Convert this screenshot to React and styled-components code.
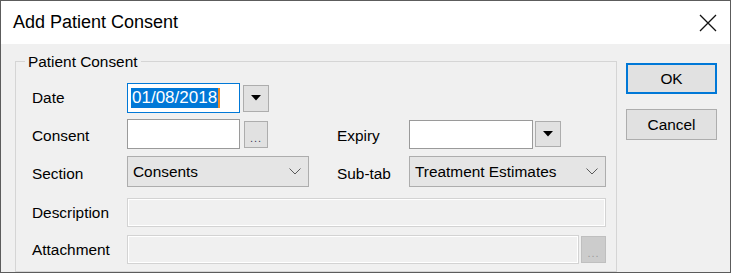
import React from "react";
import styled, { createGlobalStyle } from "styled-components";

const GlobalStyle = createGlobalStyle`
  html, body {
    margin: 0;
    padding: 0;
    background: #ffffff;
  }
  body {
    font-family: "Liberation Sans", Arial, sans-serif;
    color: #000;
  }
`;

//Window frame
const Window = styled.div`
  width: 731px;
  height: 273px;
  box-sizing: border-box;
  border: 1px solid #5c5c5c;
  display: flex;
  flex-direction: column;
`;

const TitleBar = styled.div`
  height: 43px;
  flex: none;
  background: #fff;
  display: flex;
  align-items: center;
  justify-content: space-between;
  padding: 0 13px 0 12px;
  font-size: 18px;
`;

const CloseButton = styled.div`
  width: 18px;
  height: 18px;
  display: flex;
  svg {
    display: block;
  }
`;

const Body = styled.div`
  flex: 1;
  background: #f0f0f0;
  display: flex;
  padding: 6px 0 0 14px;
  gap: 9px;
  min-height: 0;
`;

//Group box
const GroupBox = styled.fieldset`
  margin: 0;
  padding: 0;
  width: 602px;
  box-sizing: border-box;
  border: 1px solid #d5d5d5;
  min-width: 0;
`;

const Legend = styled.legend`
  margin-left: 9px;
  padding: 2px 3px 0;
  font-size: 15.4px;
  line-height: 20px;
`;

const Form = styled.div`
  padding: 11px 10px 0 16px;
`;

const Row = styled.div`
  display: grid;
  grid-template-columns: 95px 210px 72px 1fr;
  align-items: center;
  height: ${(p) => p.$h}px;
  margin-top: ${(p) => p.$mt || 0}px;
`;

const Label = styled.span`
  font-size: 15.4px;
  white-space: nowrap;
  margin-top: ${(p) => p.$dy || 0}px;
`;

const Field = styled.div`
  display: flex;
  align-items: center;
  grid-column: ${(p) => p.$span || "auto"};
`;

const TextBox = styled.div`
  width: ${(p) => p.$w}px;
  height: ${(p) => p.$h}px;
  box-sizing: border-box;
  border: 1px solid ${(p) => (p.$focused ? "#0078d7" : p.$disabled ? "#d3d3d3" : "#9a9a9a")};
  background: ${(p) => (p.$disabled ? "#f0f0f0" : "#fff")};
  box-shadow: ${(p) => (p.$disabled ? "inset 0 0 0 1px #fff" : "none")};
  display: flex;
  align-items: center;
  padding-left: 3px;
`;

const Selected = styled.span`
  background: #0078d7;
  color: #fff;
  font-size: 17px;
  line-height: 20px;
  padding: 0 1px;
`;

const Caret = styled.span`
  width: 2px;
  height: 20px;
  background: #f08a24;
`;

const SmallButton = styled.div`
  width: ${(p) => p.$w}px;
  height: ${(p) => p.$h}px;
  margin-left: ${(p) => p.$ml}px;
  box-sizing: border-box;
  border: 1px solid ${(p) => (p.$disabled ? "#bfbfbf" : "#adadad")};
  background: ${(p) => (p.$disabled ? "#cccccc" : "#e1e1e1")};
  display: flex;
  align-items: center;
  justify-content: center;
`;

const Dots = styled.span`
  font-size: 11px;
  letter-spacing: 1px;
  line-height: 1;
  margin-top: 8px;
  color: ${(p) => (p.$disabled ? "#9a9a9a" : "#3a3a5a")};
`;

const Combo = styled.div`
  width: ${(p) => p.$w}px;
  height: ${(p) => p.$h}px;
  box-sizing: border-box;
  border: 1px solid #adadad;
  background: #e5e5e5;
  display: flex;
  align-items: center;
  justify-content: space-between;
  padding: 0 7px 0 5px;
  font-size: 15.4px;
`;

//Dialog buttons
const ButtonColumn = styled.div`
  display: flex;
  flex-direction: column;
  gap: 15px;
  padding-top: 13px;
`;

const DialogButton = styled.div`
  width: 91px;
  height: 31px;
  box-sizing: border-box;
  border: ${(p) => (p.$default ? "2px solid #0078d7" : "1px solid #adadad")};
  background: #e1e1e1;
  display: flex;
  align-items: center;
  justify-content: center;
  font-size: 15.4px;
`;

const Triangle = () => (
  <svg width="10" height="6" viewBox="0 0 10 6">
    <polygon points="0,0 10,0 5,5.5" fill="#000" />
  </svg>
);

const Chevron = () => (
  <svg width="12" height="7" viewBox="0 0 12 7">
    <polyline points="0.5,0.5 6,6 11.5,0.5" fill="none" stroke="#5a5a5a" strokeWidth="1" />
  </svg>
);

const App = () => {
  return (
    <>
      <GlobalStyle />
      <Window>
        <TitleBar>
          <span>Add Patient Consent</span>
          <CloseButton>
            <svg width="18" height="18" viewBox="0 0 18 18">
              <path d="M1 1 L17 17 M17 1 L1 17" stroke="#111" strokeWidth="1.3" />
            </svg>
          </CloseButton>
        </TitleBar>
        <Body>
          <GroupBox>
            <Legend>Patient Consent</Legend>
            <Form>
              <Row $h={30}>
                <Label>Date</Label>
                <Field>
                  <TextBox $w={113} $h={30} $focused>
                    <Selected>01/08/2018</Selected>
                    <Caret />
                  </TextBox>
                  <SmallButton $w={26} $h={27} $ml={3}>
                    <Triangle />
                  </SmallButton>
                </Field>
              </Row>
              <Row $h={30} $mt={6}>
                <Label $dy={4}>Consent</Label>
                <Field>
                  <TextBox $w={113} $h={30} />
                  <SmallButton $w={24} $h={27} $ml={4}>
                    <Dots>...</Dots>
                  </SmallButton>
                </Field>
                <Label $dy={4}>Expiry</Label>
                <Field>
                  <TextBox $w={124} $h={29} />
                  <SmallButton $w={26} $h={26} $ml={2}>
                    <Triangle />
                  </SmallButton>
                </Field>
              </Row>
              <Row $h={31} $mt={7}>
                <Label $dy={4}>Section</Label>
                <Field>
                  <Combo $w={182} $h={31}>
                    <span>Consents</span>
                    <Chevron />
                  </Combo>
                </Field>
                <Label $dy={4}>Sub-tab</Label>
                <Field>
                  <Combo $w={197} $h={31}>
                    <span>Treatment Estimates</span>
                    <Chevron />
                  </Combo>
                </Field>
              </Row>
              <Row $h={29} $mt={11}>
                <Label>Description</Label>
                <Field $span="2 / -1">
                  <TextBox $w={480} $h={29} $disabled />
                </Field>
              </Row>
              <Row $h={29} $mt={8}>
                <Label>Attachment</Label>
                <Field $span="2 / -1">
                  <TextBox $w={452} $h={29} $disabled />
                  <SmallButton $w={25} $h={27} $ml={2} $disabled>
                    <Dots $disabled>...</Dots>
                  </SmallButton>
                </Field>
              </Row>
            </Form>
          </GroupBox>
          <ButtonColumn>
            <DialogButton $default>OK</DialogButton>
            <DialogButton>Cancel</DialogButton>
          </ButtonColumn>
        </Body>
      </Window>
    </>
  );
};

export default App;
